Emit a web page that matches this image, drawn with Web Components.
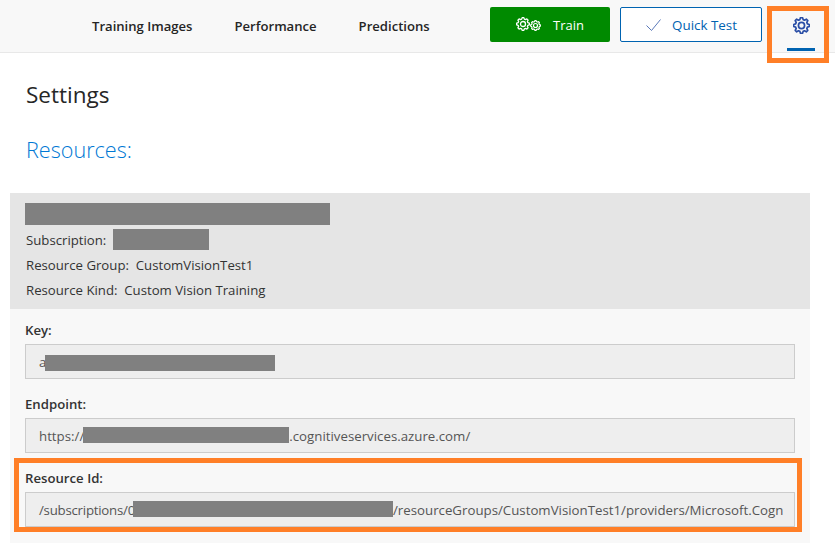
<!DOCTYPE html>
<html lang="en">
<head>
<meta charset="utf-8">
<title>Settings</title>
<style>
	html, body {
		margin: 0;
		height: 100%;
		overflow: hidden;
		background: #fff;
		font-family: "Open Sans", "Liberation Sans", sans-serif;
		color: #333;
	}
</style>
</head>
<body>
<cv-app>
	<cv-topbar>
		<cv-nav-link>Training Images</cv-nav-link>
		<cv-nav-link>Performance</cv-nav-link>
		<cv-nav-link>Predictions</cv-nav-link>
		<cv-train-button slot="actions">Train</cv-train-button>
		<cv-test-button slot="actions">Quick Test</cv-test-button>
		<cv-settings-tab slot="actions"></cv-settings-tab>
	</cv-topbar>
	<cv-settings>
		<cv-resource-head>
			<cv-redact style="--w:305px;--h:22px;--mb:2px"></cv-redact>
			<cv-meta>Subscription:&nbsp; <cv-redact style="--w:96px;--h:21px;--ml:3px"></cv-redact></cv-meta>
			<cv-meta>Resource Group:&nbsp; CustomVisionTest1</cv-meta>
			<cv-meta>Resource Kind:&nbsp; Custom Vision Training</cv-meta>
		</cv-resource-head>
		<cv-resource-body>
			<cv-field label="Key">a<cv-redact style="--w:230px;--h:16px;--ml:-1px;--mt:2px"></cv-redact></cv-field>
			<cv-field label="Endpoint">https://<cv-redact style="--w:206px;--h:16px;--ml:-1px;--mb:2px"></cv-redact>.cognitiveservices.azure.com/</cv-field>
			<cv-field label="Resource Id" highlight><span style="letter-spacing:-.25px">/subscriptions/0</span><cv-redact style="--w:260px;--h:16px;--ml:-2px;--mb:2px"></cv-redact>/resourceGroups/CustomVisionTest1/providers/Microsoft.Cogn</cv-field>
		</cv-resource-body>
	</cv-settings>
</cv-app>

<script>
// ===============
// Closure: start.
// ===============

(() => {
	// ==========
	// Constants.
	// ==========

	const BLUE = '#0063b1';
	const ORANGE = '#ff7f27';

	// =======
	// Helper.
	// =======

	// Build a toothed outline, as a path.
	const gearPath = (cx, cy, outer, inner, teeth) => {
		const step = (Math.PI * 2) / teeth;
		const points = [];

		for (let i = 0; i < teeth; i++) {
			const a = i * step;
			[[-0.34, inner], [-0.17, outer], [0.17, outer], [0.34, inner]].forEach(([k, r]) => {
				const t = a + k * step;
				points.push(`${(cx + Math.cos(t) * r).toFixed(2)} ${(cy + Math.sin(t) * r).toFixed(2)}`);
			});
		}

		return `M${points.join('L')}Z`;
	};

	// Define element, with its shadow markup.
	const define = (name, markup, Base = HTMLElement) => {
		const template = document.createElement('template');
		template.innerHTML = markup;

		customElements.define(name, class extends Base {
			constructor() {
				super();
				this.attachShadow({ mode: 'open' });
				this.shadowRoot.appendChild(template.content.cloneNode(true));
			}
		});
	};

	// ==========
	// Gear icon.
	// ==========

	class CvGear extends HTMLElement {
		constructor() {
			super();
			this.attachShadow({ mode: 'open' });

			const size = Number(this.getAttribute('size')) || 16;
			const c = size / 2;

			this.shadowRoot.innerHTML = `
				<style>
					:host { display: block; width: ${size}px; height: ${size}px; }
					svg { display: block; }
				</style>
				<svg width="${size}" height="${size}" viewBox="0 0 ${size} ${size}" fill="none" stroke="currentColor" stroke-width="${this.getAttribute('stroke') || 1.4}">
					<path stroke-linejoin="round" d="${gearPath(c, c, c - 0.6, c * 0.72, 8)}"/>
					<circle cx="${c}" cy="${c}" r="${(c * 0.36).toFixed(2)}"/>
				</svg>
			`;
		}
	}

	customElements.define('cv-gear', CvGear);

	// ===========
	// App shell.
	// ===========

	define('cv-app', `
		<style>
			:host { display: flex; flex-direction: column; height: 100vh; }
		</style>
		<slot></slot>
	`);

	define('cv-topbar', `
		<style>
			:host {
				display: flex;
				align-items: flex-start;
				flex: none;
				box-sizing: border-box;
				height: 53px;
				padding: 7px 20px 0 92px;
				background: #f8f8f8;
				border-bottom: 1px solid #e8e8e8;
			}
			nav { display: flex; gap: 42px; height: 35px; align-items: center; margin-top: 1px; }
			.actions { display: flex; align-items: flex-start; margin-left: auto; }
		</style>
		<nav><slot></slot></nav>
		<div class="actions"><slot name="actions"></slot></div>
	`);

	define('cv-nav-link', `
		<style>
			:host {
				display: block;
				font-size: 13.1px;
				font-weight: 600;
				color: #252525;
				white-space: nowrap;
			}
		</style>
		<slot></slot>
	`);

	// ========
	// Buttons.
	// ========

	define('cv-train-button', `
		<style>
			:host {
				display: flex;
				align-items: center;
				box-sizing: border-box;
				width: 120px;
				height: 35px;
				padding-left: 26px;
				background: #008a00;
				border-radius: 2px;
				color: #fff;
				font-size: 13px;
				font-weight: 500;
			}
			.gears { display: flex; align-items: flex-end; margin-right: 12px; margin-top: -2px; }
		</style>
		<span class="gears">
			<cv-gear size="14" stroke="1.3"></cv-gear>
			<cv-gear size="11" stroke="1.2"></cv-gear>
		</span>
		<slot></slot>
	`);

	define('cv-test-button', `
		<style>
			:host {
				display: flex;
				align-items: center;
				box-sizing: border-box;
				width: 142px;
				height: 35px;
				margin-left: 10px;
				padding-left: 25px;
				background: #fff;
				border: 1px solid ${BLUE};
				border-radius: 2px;
				color: ${BLUE};
				font-size: 13.4px;
			}
			svg { display: block; margin-right: 11px; }
		</style>
		<svg width="15" height="12" viewBox="0 0 15 12" fill="none" stroke="#5a78b8" stroke-width="1">
			<path d="M.5 6.5l5 5L14.5.5"/>
		</svg>
		<slot></slot>
	`);

	define('cv-settings-tab', `
		<style>
			:host {
				display: flex;
				flex-direction: column;
				align-items: center;
				position: relative;
				box-sizing: border-box;
				width: 28px;
				height: 44px;
				margin-left: 25px;
				padding-top: 10px;
				color: #2a4ea6;
			}
			.bar {
				width: 28px;
				height: 3px;
				margin-top: 14px;
				background: ${BLUE};
			}
			cv-callout { top: -1px; left: -20px; width: 52px; height: 47px; }
		</style>
		<cv-gear size="17" stroke="1.7"></cv-gear>
		<div class="bar"></div>
		<cv-callout></cv-callout>
	`);

	// The orange marker lies over other content.
	define('cv-callout', `
		<style>
			:host {
				display: block;
				position: absolute;
				border: 5px solid ${ORANGE};
				pointer-events: none;
			}
		</style>
	`);

	// =========
	// Settings.
	// =========

	define('cv-settings', `
		<style>
			:host {
				display: flex;
				flex-direction: column;
				flex: 1;
				min-height: 0;
				padding-top: 25px;
			}
			h1, h2 { margin: 0 0 0 26px; font-size: 22.5px; line-height: 34px; font-weight: 400; }
			h1 { color: #262626; }
			h2 { margin-top: 21px; margin-bottom: 26px; font-size: 21.6px; color: #0078d4; font-weight: 300; }
			.panel { flex: 1; margin: 0 25px 0 10px; background: #f8f8f8; }
		</style>
		<h1>Settings</h1>
		<h2>Resources:</h2>
		<div class="panel"><slot></slot></div>
	`);

	define('cv-resource-head', `
		<style>
			:host {
				display: flex;
				flex-direction: column;
				align-items: flex-start;
				box-sizing: border-box;
				height: 116px;
				padding: 10px 15px 0;
				background: #e5e5e5;
			}
		</style>
		<slot></slot>
	`);

	define('cv-meta', `
		<style>
			:host {
				display: flex;
				align-items: center;
				height: 25px;
				font-size: 13.2px;
				color: #333;
				white-space: nowrap;
				padding-left: 1px;
			}
		</style>
		<slot></slot>
	`);

	define('cv-resource-body', `
		<style>
			:host { display: block; padding: 9px 15px 0; }
		</style>
		<slot></slot>
	`);

	define('cv-redact', `
		<style>
			:host {
				display: inline-block;
				flex: none;
				width: var(--w);
				height: var(--h);
				margin-left: var(--ml, 0);
				margin-top: var(--mt, 0);
				margin-bottom: var(--mb, 0);
				background: #808080;
			}
		</style>
	`);

	// ======
	// Field.
	// ======

	class CvField extends HTMLElement {
		constructor() {
			super();
			this.attachShadow({ mode: 'open' });

			const label = this.getAttribute('label');
			const callout = this.hasAttribute('highlight') ? '<cv-callout></cv-callout>' : '';

			this.shadowRoot.innerHTML = `
				<style>
					:host { display: block; position: relative; height: 74px; }
					.label {
						height: 26px;
						line-height: 24px;
						font-size: 13.2px;
						font-weight: 600;
						color: #333;
					}
					.value {
						display: flex;
						align-items: center;
						box-sizing: border-box;
						height: 35px;
						padding: 1px 13px 0;
						overflow: hidden;
						background: #eee;
						border: 1px solid #ccc;
						font-size: 13.27px;
						color: #555;
						white-space: nowrap;
					}
					cv-callout { top: -8px; left: -11px; right: -7px; bottom: 8px; }
				</style>
				<div class="label">${label}:</div>
				<div class="value"><slot></slot></div>
				${callout}
			`;
		}
	}

	customElements.define('cv-field', CvField);
})();

// =============
// Closure: end.
// =============
</script>
</body>
</html>
